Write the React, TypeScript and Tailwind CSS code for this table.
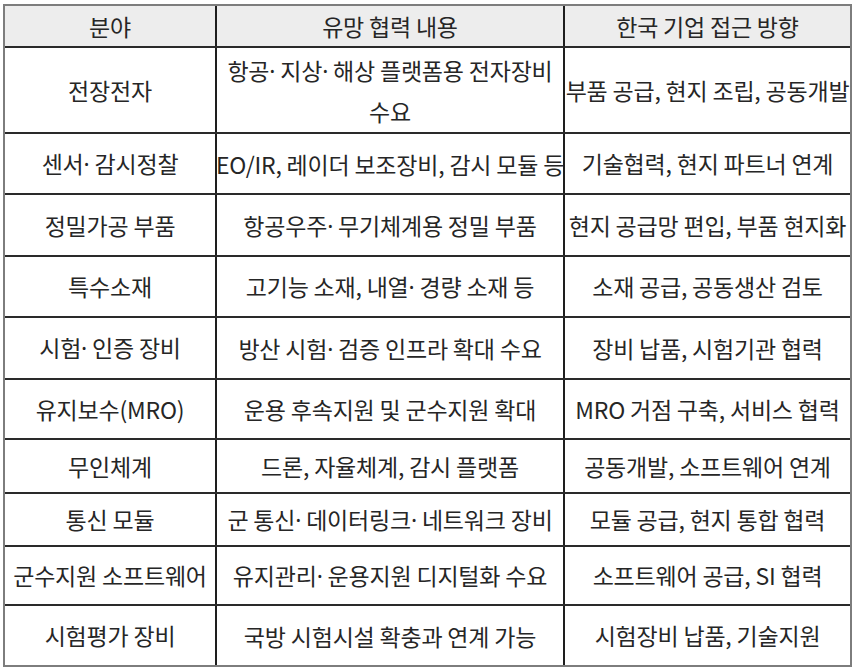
import React from "react";

const rows: { h: string; a: string; b: string[]; c: string }[] = [
  { h: "h-[86px]", a: "전장전자", b: ["항공· 지상· 해상 플랫폼용 전자장비", "수요"], c: "부품 공급, 현지 조립, 공동개발" },
  { h: "h-[61px]", a: "센서· 감시정찰", b: ["EO/IR, 레이더 보조장비, 감시 모듈 등"], c: "기술협력, 현지 파트너 연계" },
  { h: "h-[62px]", a: "정밀가공 부품", b: ["항공우주· 무기체계용 정밀 부품"], c: "현지 공급망 편입, 부품 현지화" },
  { h: "h-[61px]", a: "특수소재", b: ["고기능 소재, 내열· 경량 소재 등"], c: "소재 공급, 공동생산 검토" },
  { h: "h-[62px]", a: "시험· 인증 장비", b: ["방산 시험· 검증 인프라 확대 수요"], c: "장비 납품, 시험기관 협력" },
  { h: "h-[60px]", a: "유지보수(MRO)", b: ["운용 후속지원 및 군수지원 확대"], c: "MRO 거점 구축, 서비스 협력" },
  { h: "h-[54px]", a: "무인체계", b: ["드론, 자율체계, 감시 플랫폼"], c: "공동개발, 소프트웨어 연계" },
  { h: "h-[53px]", a: "통신 모듈", b: ["군 통신· 데이터링크· 네트워크 장비"], c: "모듈 공급, 현지 통합 협력" },
  { h: "h-[59px]", a: "군수지원 소프트웨어", b: ["유지관리· 운용지원 디지털화 수요"], c: "소프트웨어 공급, SI 협력" },
  { h: "h-[59px]", a: "시험평가 장비", b: ["국방 시험시설 확충과 연계 가능"], c: "시험장비 납품, 기술지원" },
];

function T({ s }: { s: string }) {
  const parts = s.split("·");
  return (
    <span>
      {parts.map((p, i) => (
        <React.Fragment key={i}>
          {i > 0 && <span style={{ fontFamily: '"Noto Sans", sans-serif' }}>·</span>}
          {p}
        </React.Fragment>
      ))}
    </span>
  );
}

export default function App() {
  return (
    <div
      className="w-[853px] h-[671px] bg-white pt-[4px] pl-[3px] text-[#262626] text-[23px] tracking-[-0.2px]"
      style={{ fontFamily: '"Noto Sans CJK KR", "Noto Sans", sans-serif' }}
    >
      <div className="w-[849px] border-2 border-[#7d7d7d] flex flex-col">
        <div className="flex h-[42px] bg-[#ededed] border-b-2 border-[#2a2a2a]">
          <div className="w-[212px] border-r-2 border-[#1e1e1e] flex items-center justify-center">분야</div>
          <div className="w-[348px] border-r-2 border-[#1e1e1e] flex items-center justify-center">유망 협력 내용</div>
          <div className="w-[285px] flex items-center justify-center">한국 기업 접근 방향</div>
        </div>
        {rows.map((r, i) => (
          <div
            key={i}
            className={`flex ${r.h} ${i < rows.length - 1 ? "border-b-2 border-[#2a2a2a]" : ""}`}
          >
            <div className="w-[212px] border-r-2 border-[#1e1e1e] flex items-center justify-center whitespace-nowrap">
              <T s={r.a} />
            </div>
            <div className="w-[348px] border-r-2 border-[#1e1e1e] flex flex-col items-center justify-center whitespace-nowrap leading-[40px]">
              {r.b.map((t, j) => (
                <div key={j}>
                  <T s={t} />
                </div>
              ))}
            </div>
            <div className="w-[285px] flex items-center justify-center whitespace-nowrap">
              <T s={r.c} />
            </div>
          </div>
        ))}
      </div>
    </div>
  );
}
